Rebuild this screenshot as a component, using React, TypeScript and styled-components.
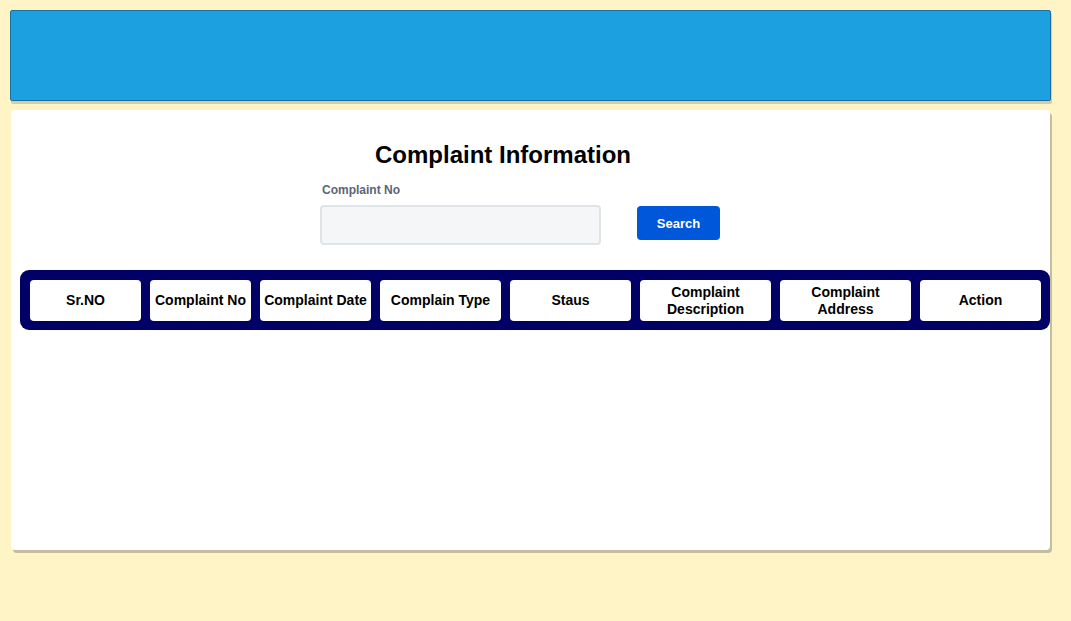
import React from "react";
import styled, { createGlobalStyle } from "styled-components";

const GlobalStyle = createGlobalStyle`
  html, body {
    margin: 0;
    padding: 0;
    background: #fff4c6;
    font-family: "Liberation Sans", Arial, sans-serif;
  }
`;

const columns = [
  { label: "Sr.NO", width: 111 },
  { label: "Complaint No", width: 101 },
  { label: "Complaint Date", width: 111 },
  { label: "Complain Type", width: 121 },
  { label: "Staus", width: 121 },
  { label: "Complaint Description", width: 131 },
  { label: "Complaint Address", width: 131 },
  { label: "Action", width: 121 },
];

const App: React.FC = () => {
  return (
    <>
      <GlobalStyle />
      <Page>
        <TopBar />
        <Card>
          <Title>Complaint Information</Title>
          <SearchForm>
            <Field>
              <Label>Complaint No</Label>
              <Input type="text" />
            </Field>
            <SearchButton>Search</SearchButton>
          </SearchForm>
          <TableHead>
            {columns.map((col) => (
              <HeadCell key={col.label} $width={col.width}>
                {col.label}
              </HeadCell>
            ))}
          </TableHead>
        </Card>
      </Page>
    </>
  );
};

export default App;

const Page = styled.div`
  width: 1071px;
  height: 621px;
  box-sizing: border-box;
  padding: 10px 0 0 10px;
  display: flex;
  flex-direction: column;
  gap: 9px;
`;

const TopBar = styled.div`
  width: 1041px;
  height: 91px;
  box-sizing: border-box;
  background: #1ca0e0;
  border: 1px solid #1a70a0;
  border-radius: 2px;
  box-shadow: 1px 3px 0 #d6cca2;
`;

const Card = styled.div`
  margin-left: 1px;
  width: 1039px;
  height: 440px;
  box-sizing: border-box;
  background: #ffffff;
  border-radius: 4px;
  box-shadow: 2px 3px 0 #c4bc9c;
  display: flex;
  flex-direction: column;
  padding-top: 31px;
`;

const Title = styled.h1`
  margin: 0;
  padding-right: 55px;
  text-align: center;
  font-size: 24px;
  line-height: 28px;
  font-weight: 700;
  color: #000;
`;

const SearchForm = styled.div`
  display: flex;
  align-items: flex-end;
  gap: 36px;
  margin: 14px 0 0 309px;
`;

const Field = styled.div`
  display: flex;
  flex-direction: column;
  gap: 8px;
`;

const Label = styled.label`
  margin-left: 2px;
  font-size: 12px;
  line-height: 14px;
  font-weight: 700;
  color: #5b6479;
`;

const Input = styled.input`
  width: 281px;
  height: 40px;
  box-sizing: border-box;
  background: #f5f6f8;
  border: 2px solid #e0e3e8;
  border-radius: 4px;
  outline: none;
`;

const SearchButton = styled.button`
  width: 83px;
  height: 34px;
  margin-bottom: 5px;
  background: #0057d9;
  color: #fff;
  border: none;
  border-radius: 4px;
  font-family: "Liberation Sans", Arial, sans-serif;
  font-size: 13px;
  font-weight: 700;
`;

const TableHead = styled.div`
  margin: 25px 0 0 9px;
  width: 1030px;
  height: 60px;
  box-sizing: border-box;
  background: #000066;
  border-radius: 9px;
  display: flex;
  gap: 9px;
  padding: 10px 9px 9px 10px;
`;

const HeadCell = styled.div<{ $width: number }>`
  width: ${(p) => p.$width}px;
  flex: none;
  height: 41px;
  box-sizing: border-box;
  padding: 0 3px;
  background: #fff;
  border-radius: 4px;
  display: flex;
  align-items: center;
  justify-content: center;
  text-align: center;
  font-size: 14px;
  line-height: 17px;
  font-weight: 700;
  color: #000;
`;
